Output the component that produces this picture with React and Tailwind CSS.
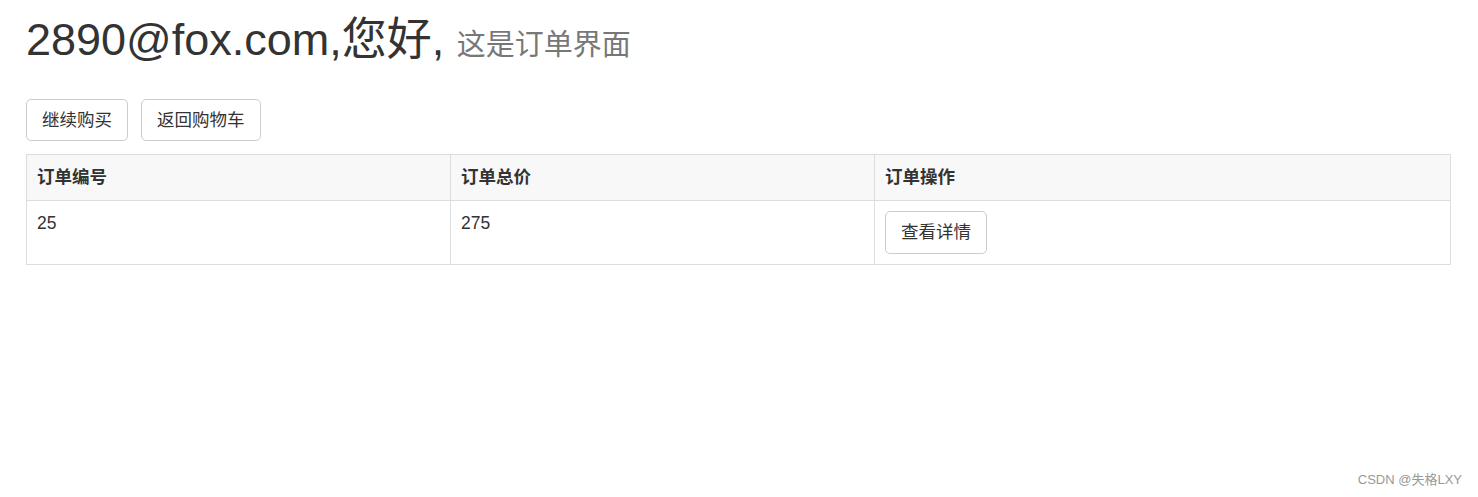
const font = { fontFamily: '"Liberation Sans", "Noto Sans CJK SC", sans-serif' };

const orders = [{ id: 25, total: 275 }];

function Btn({ children, tall }) {
  return (
    <button className={(tall ? 'h-[43px] ' : 'h-[42px] ') + 'rounded-[5px] border border-[#ccc] bg-white px-[15px] text-[17.5px] leading-[25px] text-[#333]'}>
      {children}
    </button>
  );
}

export default function App() {
  return (
    <div className="flex h-[497px] w-[1478px] flex-col bg-white text-[#333]" style={font}>
      <div className="pl-[26px]">
        <h1 className="mt-[15px] h-[50px] whitespace-nowrap text-[45px] font-normal leading-[50px]">
          2890@fox.com,您好, <small className="text-[29px] text-[#777]">这是订单界面</small>
        </h1>
        <div className="mt-[34px] flex gap-[13px]">
          <Btn>继续购买</Btn>
          <Btn>返回购物车</Btn>
        </div>
        <table className="mt-[13px] w-[1424px] table-fixed border-collapse border border-[#ddd] text-[17.5px] leading-[25px]">
          <colgroup>
            <col className="w-[424px]" />
            <col className="w-[424px]" />
            <col className="w-[576px]" />
          </colgroup>
          <thead>
            <tr className="bg-[#f8f8f8]">
              <th className="border border-[#ddd] px-[10px] py-[10px] text-left font-bold">订单编号</th>
              <th className="border border-[#ddd] px-[10px] py-[10px] text-left font-bold">订单总价</th>
              <th className="border border-[#ddd] px-[10px] py-[10px] text-left font-bold">订单操作</th>
            </tr>
          </thead>
          <tbody>
            {orders.map((o) => (
              <tr key={o.id}>
                <td className="border border-[#ddd] px-[10px] py-[10px] align-top">{o.id}</td>
                <td className="border border-[#ddd] px-[10px] py-[10px] align-top">{o.total}</td>
                <td className="border border-[#ddd] px-[10px] py-[10px] align-top">
                  <Btn tall>查看详情</Btn>
                </td>
              </tr>
            ))}
          </tbody>
        </table>
      </div>
      <div className="mt-auto mb-[8px] pr-[16px] text-right text-[13px] text-[#999]">CSDN @失格LXY</div>
    </div>
  );
}
